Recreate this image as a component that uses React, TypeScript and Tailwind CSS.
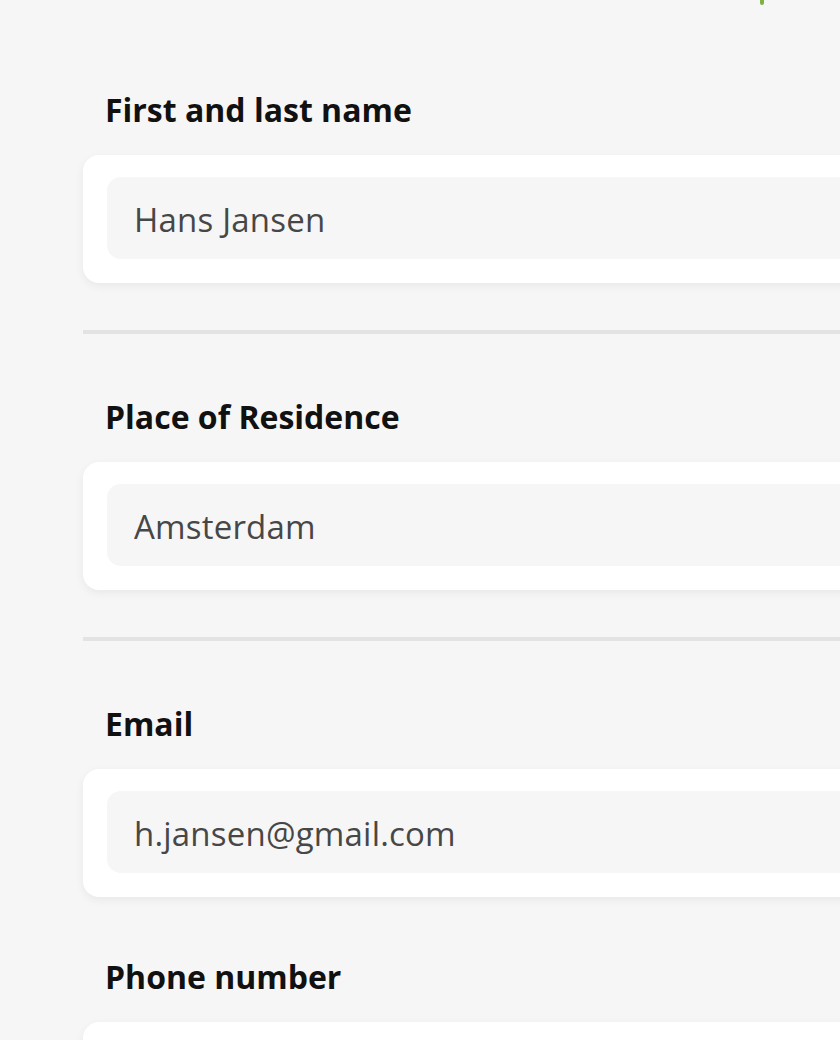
const fields = [
  { label: "First and last name", value: "Hans Jansen", divider: true },
  { label: "Place of Residence", value: "Amsterdam", divider: true },
  { label: "Email", value: "h.jansen@gmail.com", divider: false },
  { label: "Phone number", value: "", divider: false },
];

function Field({ label, value, divider }: { label: string; value: string; divider: boolean }) {
  return (
    <div className="flex flex-col">
      <label className="pl-[22px] text-[32px] font-bold leading-[40px] text-[#111]">{label}</label>
      <div className="mt-[25px] rounded-[16px] bg-white px-[24px] pt-[22px] pb-[24px] shadow-[0_3px_10px_rgba(0,0,0,0.06)]">
        <input
          readOnly
          defaultValue={value}
          className="h-[82px] w-full rounded-[14px] bg-[#f6f6f6] pl-[27px] pt-[2px] text-[33px] tracking-[0.2px] text-[#474747] outline-none"
        />
      </div>
      {divider ? (
        <div className="mt-[47px] mb-[63px] h-[4px] bg-[#e3e3e3]" />
      ) : (
        <div className="h-[60px]" />
      )}
    </div>
  );
}

export default function App() {
  return (
    <div
      className="h-[1040px] w-full overflow-hidden bg-[#f6f6f6]"
      style={{ fontFamily: '"Open Sans", "Noto Sans", sans-serif' }}
    >
      {/* cut-off step indicator at the very top */}
      <div className="flex h-[6px] pl-[760px]">
        <div className="h-[5px] w-[4px] rounded-b-sm bg-[#7cb342]" />
      </div>

      <div className="flex w-[1000px] flex-col pt-[84px] pl-[83px]">
        {fields.map((f) => (
          <Field key={f.label} {...f} />
        ))}
      </div>
    </div>
  );
}
